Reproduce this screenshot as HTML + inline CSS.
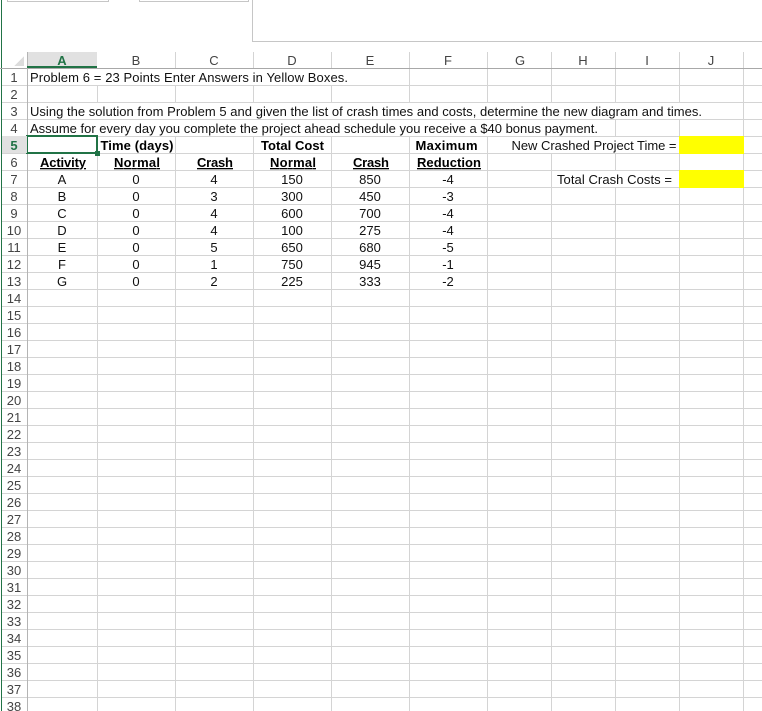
<!DOCTYPE html>
<html><head><meta charset="utf-8"><style>
html,body{margin:0;padding:0;background:#fff;width:762px;height:711px;overflow:hidden}
svg{display:block;position:absolute;left:0;top:0}
text{font-family:"Liberation Sans",Arial,sans-serif;font-size:13px;fill:#111}
.h text{fill:#444;text-anchor:middle}
.c text{text-anchor:middle}
.b text,text.b{font-weight:bold;fill:#000}
.u{text-decoration:underline}
</style></head><body>
<svg width="762" height="711" viewBox="0 0 762 711" xmlns="http://www.w3.org/2000/svg" shape-rendering="crispEdges">
<defs><pattern id="rows" x="0" y="68" width="762" height="17" patternUnits="userSpaceOnUse"><rect width="762" height="1" fill="#d4d4d4"/></pattern></defs>
<rect x="1" y="0" width="1" height="711" fill="#217346"/>
<path d="M7.500 0V1.500H108.500V0M139.500 0V1.500H248.500V0M252.500 0V41.500H762" fill="none" stroke="#c6c6c6" stroke-width="1"/>

<rect x="28" y="85" width="734" height="626" fill="url(#rows)"/>
<rect x="2" y="85" width="25" height="626" fill="url(#rows)"/>
<g fill="#d4d4d4">
<rect x="97" y="85" width="1" height="17"/><rect x="97" y="136" width="1" height="575"/>
<rect x="175" y="52" width="1" height="16"/><rect x="175" y="85" width="1" height="17"/><rect x="175" y="136" width="1" height="575"/>
<rect x="253" y="52" width="1" height="16"/><rect x="253" y="85" width="1" height="17"/><rect x="253" y="136" width="1" height="575"/>
<rect x="331" y="52" width="1" height="16"/><rect x="331" y="85" width="1" height="17"/><rect x="331" y="136" width="1" height="575"/>
<rect x="409" y="52" width="1" height="50"/><rect x="409" y="136" width="1" height="575"/>
<rect x="487" y="52" width="1" height="50"/><rect x="487" y="136" width="1" height="575"/>
<rect x="551" y="52" width="1" height="50"/><rect x="551" y="153" width="1" height="558"/>
<rect x="615" y="52" width="1" height="50"/><rect x="615" y="119" width="1" height="17"/><rect x="615" y="153" width="1" height="17"/><rect x="615" y="187" width="1" height="524"/>
<rect x="679" y="52" width="1" height="50"/><rect x="679" y="119" width="1" height="592"/>
<rect x="743" y="52" width="1" height="659"/>
</g>
<rect x="27" y="52" width="70" height="15" fill="#e1e1e1"/>
<rect x="0" y="68" width="762" height="1" fill="#a8a8a8"/>
<rect x="27" y="52" width="1" height="659" fill="#b4b4b4"/>
<rect x="27" y="66" width="70" height="2" fill="#217346"/>
<path d="M24 56V66H14Z" fill="#dcdcdc"/>

<rect x="679" y="136" width="65" height="18" fill="#ffff00"/>
<rect x="679" y="170" width="65" height="18" fill="#ffff00"/>

<rect x="27" y="136" width="70" height="17" fill="none" stroke="#217346" stroke-width="2"/>
<rect x="95" y="151" width="5" height="5" fill="#217346"/>
<rect x="2" y="136" width="25" height="17" fill="#e1e1e1"/>

<g class="h" shape-rendering="auto">
<text x="62" y="65" style="font-weight:bold;fill:#217346">A</text>
<text x="136" y="65">B</text><text x="214" y="65">C</text><text x="292" y="65">D</text><text x="370" y="65">E</text><text x="448" y="65">F</text><text x="520" y="65">G</text><text x="583" y="65">H</text><text x="647" y="65">I</text><text x="711" y="65">J</text>
<text x="14" y="82">1</text><text x="14" y="99">2</text><text x="14" y="116">3</text><text x="14" y="133">4</text>
<text x="14" y="150" style="font-weight:bold;fill:#217346">5</text>
<text x="14" y="167">6</text><text x="14" y="184">7</text><text x="14" y="201">8</text><text x="14" y="218">9</text><text x="14" y="235">10</text><text x="14" y="252">11</text><text x="14" y="269">12</text><text x="14" y="286">13</text><text x="14" y="303">14</text><text x="14" y="320">15</text><text x="14" y="337">16</text><text x="14" y="354">17</text><text x="14" y="371">18</text><text x="14" y="388">19</text><text x="14" y="405">20</text><text x="14" y="422">21</text><text x="14" y="439">22</text><text x="14" y="456">23</text><text x="14" y="473">24</text><text x="14" y="490">25</text><text x="14" y="507">26</text><text x="14" y="524">27</text><text x="14" y="541">28</text><text x="14" y="558">29</text><text x="14" y="575">30</text><text x="14" y="592">31</text><text x="14" y="609">32</text><text x="14" y="626">33</text><text x="14" y="643">34</text><text x="14" y="660">35</text><text x="14" y="677">36</text><text x="14" y="694">37</text><text x="14" y="711">38</text>
</g>

<g shape-rendering="auto">
<text x="30" y="82" textLength="318">Problem 6 = 23 Points Enter Answers in Yellow Boxes.</text>
<text x="30" y="116" textLength="672">Using the solution from Problem 5 and given the list of crash times and costs, determine the new diagram and times.</text>
<text x="30" y="133" textLength="568">Assume for every day you complete the project ahead schedule you receive a $40 bonus payment.</text>
<text x="511.500" y="150" textLength="165">New Crashed Project Time =</text>
<text x="557" y="184" textLength="115">Total Crash Costs =</text>
<g class="b">
<text x="100.500" y="150" textLength="73">Time (days)</text>
<text x="261" y="150" textLength="63">Total Cost</text>
<text x="415.500" y="150" textLength="62">Maximum</text>
<text class="u" x="40" y="167" textLength="46">Activity</text>
<text class="u" x="114" y="167" textLength="46">Normal</text>
<text class="u" x="197" y="167" textLength="36">Crash</text>
<text class="u" x="270" y="167" textLength="46">Normal</text>
<text class="u" x="353" y="167" textLength="36">Crash</text>
<text class="u" x="417" y="167" textLength="64">Reduction</text>
</g>
<g class="c">
<text x="62" y="184">A</text><text x="136" y="184">0</text><text x="214" y="184">4</text><text x="292" y="184">150</text><text x="370" y="184">850</text><text x="448" y="184">-4</text>
<text x="62" y="201">B</text><text x="136" y="201">0</text><text x="214" y="201">3</text><text x="292" y="201">300</text><text x="370" y="201">450</text><text x="448" y="201">-3</text>
<text x="62" y="218">C</text><text x="136" y="218">0</text><text x="214" y="218">4</text><text x="292" y="218">600</text><text x="370" y="218">700</text><text x="448" y="218">-4</text>
<text x="62" y="235">D</text><text x="136" y="235">0</text><text x="214" y="235">4</text><text x="292" y="235">100</text><text x="370" y="235">275</text><text x="448" y="235">-4</text>
<text x="62" y="252">E</text><text x="136" y="252">0</text><text x="214" y="252">5</text><text x="292" y="252">650</text><text x="370" y="252">680</text><text x="448" y="252">-5</text>
<text x="62" y="269">F</text><text x="136" y="269">0</text><text x="214" y="269">1</text><text x="292" y="269">750</text><text x="370" y="269">945</text><text x="448" y="269">-1</text>
<text x="62" y="286">G</text><text x="136" y="286">0</text><text x="214" y="286">2</text><text x="292" y="286">225</text><text x="370" y="286">333</text><text x="448" y="286">-2</text>
</g>
</g>
</svg>
</body></html>
